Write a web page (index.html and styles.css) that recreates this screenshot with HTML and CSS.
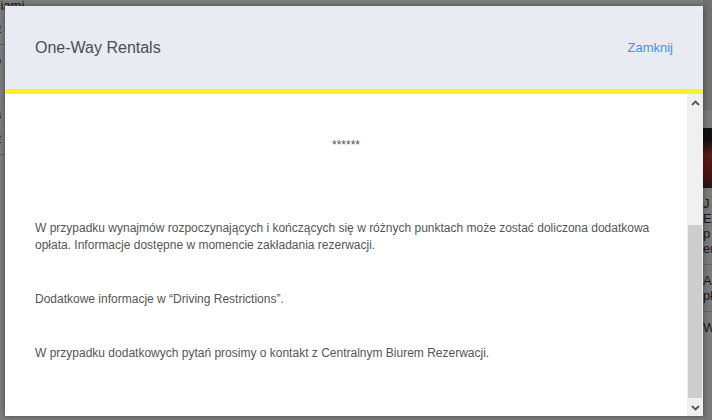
FILE: index.html
```html
<!DOCTYPE html>
<html lang="pl">

<head>
    <meta charset="UTF-8">
    <meta name="viewport" content="width=device-width, initial-scale=1.0">
    <title>One-Way Rentals</title>
    <link rel="stylesheet" href="styles.css">
</head>

<body>
    <div class="page">
        <div class="page-left">
            <p class="page-top">ziami</p>
            <a class="page-link" href="#">e</a>
            <hr>
            <p class="page-bold">e</p>
            <p class="page-text">c<br>r<br>a</p>
            <a class="page-link" href="#">e</a>
            <hr>
        </div>
        <div class="page-right">
            <div class="page-right-top"></div>
            <div class="car"></div>
            <p class="page-text">J s<br>E<br>p<br>en</p>
            <hr>
            <p class="page-text">A<br>pł</p>
            <hr>
            <p class="page-text">W</p>
        </div>
    </div>

    <div class="overlay"></div>

    <div class="modal">
        <div class="modal-header">
            <h2>One-Way Rentals</h2>
            <a href="#" class="close-link">Zamknij</a>
        </div>

        <div class="modal-body">
            <div class="modal-content">
                <p class="hidden-line">Koszt ten nie jest wliczony w cenę rezerwacji online.</p>
                <p class="stars">******</p>
                <p>W przypadku wynajmów rozpoczynających i kończących się w różnych punktach może zostać doliczona dodatkowa opłata. Informacje dostępne w momencie zakładania rezerwacji.</p>
                <p>Dodatkowe informacje w “Driving Restrictions”.</p>
                <p>W przypadku dodatkowych pytań prosimy o kontakt z Centralnym Biurem Rezerwacji.</p>
            </div>

            <div class="scrollbar">
                <div class="scroll-btn">
                    <svg width="9" height="6" viewBox="0 0 9 6"><path d="M1 5 L4.5 1.5 L8 5" fill="none" stroke="#555" stroke-width="1.8"/></svg>
                </div>
                <div class="scroll-track">
                    <div class="scroll-thumb"></div>
                </div>
                <div class="scroll-btn">
                    <svg width="9" height="6" viewBox="0 0 9 6"><path d="M1 1 L4.5 4.5 L8 1" fill="none" stroke="#555" stroke-width="1.8"/></svg>
                </div>
            </div>
        </div>
    </div>
</body>

</html>
```

FILE: styles.css
```css
body {
    font-family: 'Liberation Sans', Arial, sans-serif;
    margin: 0;
    padding: 0;
    width: 712px;
    height: 420px;
    overflow: hidden;
    position: relative;
    background-color: #fff;
}

/* page behind the dialog */
.page {
    display: flex;
    justify-content: space-between;
    height: 420px;
    font-size: 13px;
    color: #333;
}

.page-left {
    width: 40px;
    margin-left: -6px;
}

.page-right {
    width: 120px;
    margin-right: -111px;
    background-color: #f4f4f4;
}

.page-right-top {
    height: 110px;
    background-color: #e2e2e2;
    margin-bottom: 18px;
}

.page-top {
    margin: -2px 0 6px;
}

.page-link {
    color: #2a6ab8;
    display: block;
    margin-bottom: 10px;
}

.page-bold {
    font-weight: bold;
    margin: 8px 0;
}

.page-text {
    margin: 8px 0;
    line-height: 15px;
}

.page hr {
    border: none;
    border-top: 1px solid #ccc;
    margin: 4px 0;
}

.car {
    height: 60px;
    background: linear-gradient(170deg, #222 15%, #b83a30 35%, #8c2520 60%, #333 80%, #f4f4f4 95%);
}

.overlay {
    position: absolute;
    inset: 0;
    background-color: rgba(0, 0, 0, 0.5);
}

/* dialog */
.modal {
    position: absolute;
    left: 5px;
    top: 6px;
    width: 698px;
    height: 410px;
    display: flex;
    flex-direction: column;
    background-color: #fff;
    box-shadow: 0 0 6px rgba(0, 0, 0, 0.45);
}

.modal-header {
    height: 83px;
    display: flex;
    justify-content: space-between;
    align-items: center;
    padding: 0 30px;
    background-color: #e8ebf2;
    border-bottom: 5px solid #ffef26;
}

.modal-header h2 {
    margin: 0;
    font-size: 16px;
    font-weight: normal;
    color: #4b4d55;
}

.close-link {
    color: #4a90e8;
    font-size: 13px;
    text-decoration: none;
}

.modal-body {
    flex: 1;
    display: flex;
    overflow: hidden;
}

.modal-content {
    flex: 1;
    padding: 0 30px;
    margin-top: -15px;
    font-size: 12px;
    line-height: 17px;
    color: #555;
}

.modal-content p {
    margin: 0 0 37px;
}

.modal-content .hidden-line {
    margin-bottom: 41px;
}

.modal-content .stars {
    text-align: center;
    margin-bottom: 66px;
}

.scrollbar {
    width: 16px;
    display: flex;
    flex-direction: column;
    background-color: #f0f0f0;
}

.scroll-btn {
    height: 17px;
    display: flex;
    align-items: center;
    justify-content: center;
}

.scroll-track {
    flex: 1;
    display: flex;
    flex-direction: column;
}

.scroll-thumb {
    margin: 114px 1px 0;
    height: 173px;
    background-color: #cdcdcd;
}
```
